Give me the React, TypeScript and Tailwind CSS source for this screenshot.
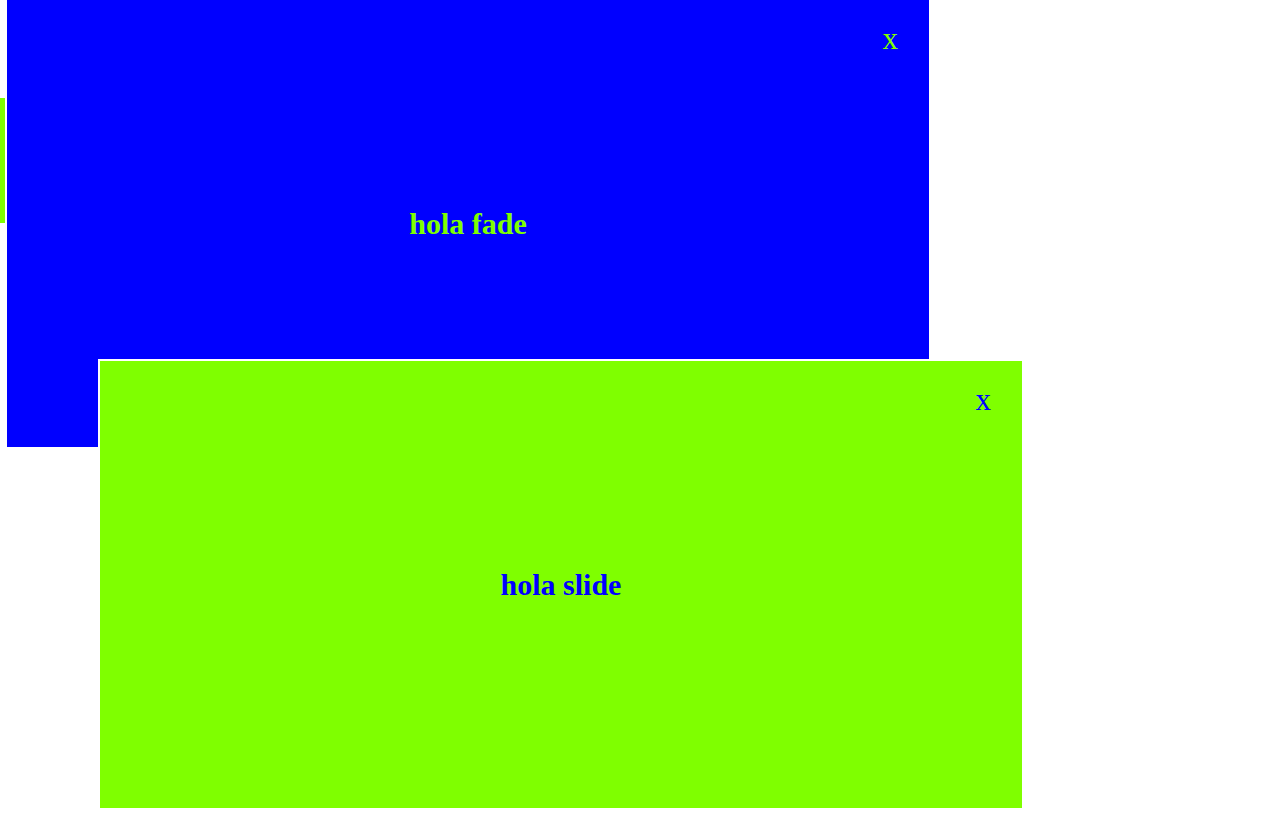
import React from 'react';

type PanelProps = {
  label: string;
  className: string;
  textColor: string;
};

function Panel({ label, className, textColor }: PanelProps) {
  return (
    <div className={`absolute flex items-center justify-center ${className}`}>
      {/* close button, top right */}
      <button
        className={`absolute top-[22px] right-[31px] text-[31px] leading-[34px] font-normal ${textColor}`}
        style={{ fontFamily: '"Liberation Serif", serif' }}
      >
        x
      </button>
      <h2 className={`m-0 text-[30px] font-bold ${textColor}`}>{label}</h2>
    </div>
  );
}

export default function App() {
  return (
    <div
      className="relative w-[1287px] h-[832px] overflow-hidden bg-white"
      style={{ fontFamily: '"Liberation Serif", serif' }}
    >
      <div className="absolute left-[-917px] top-[98px] w-[922px] h-[125px] bg-[#7fff00]" />

      <Panel
        label="hola fade"
        className="left-[7px] top-0 w-[922px] h-[447px] bg-[#0000ff]"
        textColor="text-[#7fff00]"
      />

      <Panel
        label="hola slide"
        className="left-[98px] top-[359px] w-[926px] h-[451px] border-2 border-white bg-[#7fff00]"
        textColor="text-[#0000ff]"
      />
    </div>
  );
}
